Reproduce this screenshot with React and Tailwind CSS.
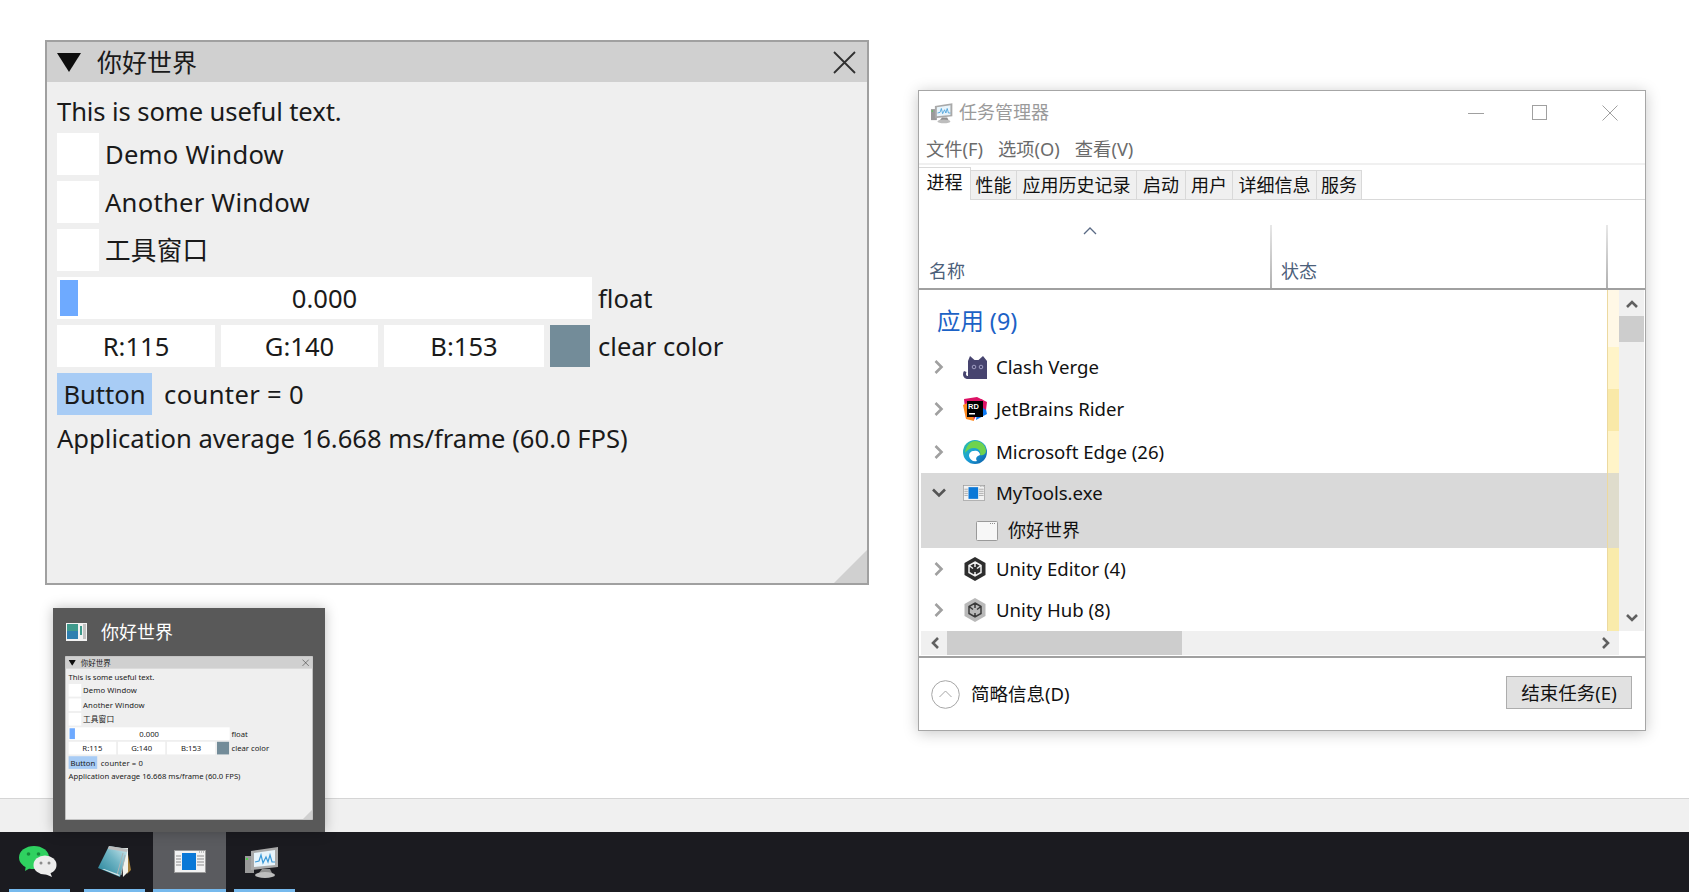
import React from "react";

const FONT = "[font-family:'Noto_Sans','Noto_Sans_CJK_SC',sans-serif]";

function ImguiBox({ w, children }) {
  return <div className={`${w} h-[42px] bg-white flex items-center justify-center pt-[2px]`}>{children}</div>;
}

function ImguiWindow() {
  return (
    <div className={`relative w-[824px] h-[545px] bg-[#efefef] border-2 border-[#a0a0a0] text-[#1a1a1a] text-[25.6px] ${FONT}`}>
      <div className="h-[40px] bg-[#d0d0d0] flex items-center justify-between pl-[10px] pr-[10px] text-[25px]">
        <div className="flex items-center gap-[16px]">
          <svg width="24" height="20" viewBox="0 0 24 20"><path d="M0 1h24L12 20z" fill="#0d0d0d" /></svg>
          <span className="leading-[40px]">你好世界</span>
        </div>
        <svg width="25" height="25" viewBox="0 0 25 25" fill="none" stroke="#303030" strokeWidth="1.8"><path d="M2 2l21 21M23 2L2 23" /></svg>
      </div>
      <div className="flex flex-col gap-[6px] pl-[10px] pt-[11px]">
        <div className="h-[34px] leading-[38px] tracking-[-0.1px]">This is some useful text.</div>
        {["Demo Window", "Another Window", "工具窗口"].map((t) => (
          <div key={t} className="flex items-center gap-[6px] h-[42px]">
            <div className="w-[42px] h-[42px] bg-white" />
            <span className="pt-[3px] tracking-[0.25px]">{t}</span>
          </div>
        ))}
        <div className="flex items-center gap-[6px] h-[42px]">
          <div className="relative w-[535px] h-[42px] bg-white flex items-center justify-center">
            <div className="absolute left-[3px] top-[3px] w-[18px] h-[36px] bg-[#6eaaff]" />
            <span className="pt-[2px]">0.000</span>
          </div>
          <span className="pt-[2px]">float</span>
        </div>
        <div className="flex items-center gap-[6px] h-[42px]">
          <ImguiBox w="w-[158px]">R:115</ImguiBox>
          <ImguiBox w="w-[157px]">G:140</ImguiBox>
          <ImguiBox w="w-[160px]">B:153</ImguiBox>
          <div className="w-[40px] h-[42px] bg-[#738c99]" />
          <span className="ml-[2px] pt-[2px]">clear color</span>
        </div>
        <div className="flex items-center gap-[12px] h-[42px]">
          <div className="w-[95px] h-[42px] bg-[#a8ccf5] flex items-center justify-center pt-[2px]">Button</div>
          <span className="pt-[2px] tracking-[0.35px]">counter = 0</span>
        </div>
        <div className="h-[34px] leading-[36px]">Application average 16.668 ms/frame (60.0 FPS)</div>
      </div>
      <div className="absolute right-0 bottom-0 w-[33px] h-[33px] bg-[#d0d0d0] [clip-path:polygon(100%_0,100%_100%,0_100%)]" />
    </div>
  );
}

function MonitorIcon({ size = 34 }) {
  return (
    <svg width={size} height={size} viewBox="0 0 34 32">
      <rect x="0" y="10" width="9" height="17" fill="#9a9a9a" />
      <rect x="1" y="12" width="2" height="2" fill="#4fd04f" />
      <path d="M6 5L33 1v20L6 24z" fill="#a9a9a9" />
      <path d="M9 7L30 4v15L9 21z" fill="#e8f4fb" />
      <path d="M10 16l4-1 2-6 2 8 3-6 2 5 2-7 2 7h3" fill="none" stroke="#3c9ad8" strokeWidth="1.2" />
      <path d="M17 23h8l2 4H14z" fill="#8f8f8f" />
      <ellipse cx="20" cy="29" rx="10" ry="3" fill="#bdbdbd" />
    </svg>
  );
}

function AppIcon({ w = 32, h = 23 }) {
  return (
    <svg width={w} height={h} viewBox="0 0 32 23">
      <rect x="0.5" y="0.5" width="31" height="22" fill="#f2f2f2" stroke="#9a9a9a" />
      <rect x="8" y="3" width="14" height="17" fill="#0a78d7" />
      <path d="M2 6h5M2 9h5M2 12h5M2 15h5M23 6h7M23 9h7M23 12h7M23 15h7M25 2h1M27 2h1M29 2h1" stroke="#8d8d8d" strokeWidth="1" />
    </svg>
  );
}

function NotepadIcon() {
  return (
    <svg width="33" height="33" viewBox="0 0 33 33">
      <defs>
        <linearGradient id="np" x1="0" y1="1" x2="1" y2="0">
          <stop offset="0" stopColor="#1f7f96" />
          <stop offset="0.55" stopColor="#6fb4c4" />
          <stop offset="1" stopColor="#d5ecf0" />
        </linearGradient>
      </defs>
      <path d="M29 4l4 21-4 4z" fill="#a37f3a" />
      <path d="M24 3l6 0 0 24-5 5z" fill="#f2f2ec" />
      <path d="M11 1l19 3-8 28L0 23z" fill="url(#np)" />
      <path d="M11 1l19 3-1 3L10 4z" fill="#bdbdbd" />
      <path d="M25 8l-6 22M27 10l-4 20" stroke="#a9b3b5" strokeWidth="1" />
      <path d="M4 24l17 7 1-1L6 24z" fill="#dfe9eb" />
    </svg>
  );
}

function WeChatIcon() {
  return (
    <svg width="38" height="31" viewBox="0 0 38 31">
      <ellipse cx="15" cy="11.5" rx="15" ry="11.5" fill="#2fd160" />
      <path d="M7 19l-1 6 7-4z" fill="#2fd160" />
      <circle cx="9.5" cy="8" r="1.8" fill="#168a3b" />
      <circle cx="19.5" cy="8" r="1.8" fill="#168a3b" />
      <ellipse cx="26" cy="19" rx="11.5" ry="9.5" fill="#ececec" />
      <path d="M31 26l2 5-7-3z" fill="#ececec" />
      <circle cx="22" cy="17" r="1.5" fill="#8c8c8c" />
      <circle cx="30" cy="17" r="1.5" fill="#8c8c8c" />
    </svg>
  );
}

function ThumbIcon() {
  return (
    <svg width="21" height="18" viewBox="0 0 21 18">
      <rect width="21" height="18" fill="#f2f2f2" />
      <rect x="1" y="1" width="11" height="15" fill="#3f9a8c" />
      <rect x="1" y="8" width="11" height="8" fill="#2f7fb0" />
      <rect x="14" y="3" width="2" height="9" fill="#3f9a8c" />
      <rect x="17" y="1" width="3" height="15" fill="#7b7b7b" opacity="0.4" />
    </svg>
  );
}

function ClashIcon() {
  return (
    <svg width="24" height="24" viewBox="0 0 24 24">
      <path d="M7 1l4.500 4h4l4.500-4 4 5v18H5C0 24-1 19 1 16l2.500 1c-1 2-.5 4 1.500 4V6z" fill="#47446f" />
      <circle cx="11" cy="12" r="1.8" fill="none" stroke="#b5b3d6" strokeWidth="0.8" />
      <circle cx="18" cy="12" r="1.8" fill="none" stroke="#b5b3d6" strokeWidth="0.8" />
    </svg>
  );
}

function RiderIcon() {
  return (
    <svg width="24" height="24" viewBox="0 0 24 24">
      <path d="M1 2l13-2 6 3-9 20-8-2z" fill="#dd1265" />
      <path d="M0 8l3 14 8 2-2-20z" fill="#ff8a1e" />
      <path d="M13 23l11-6-2-9-8 8z" fill="#0d7bf7" />
      <path d="M18 2l6 3-1 8-6-4z" fill="#dd1265" />
      <rect x="4" y="4" width="16" height="16" fill="#000" />
      <text x="5" y="12" fontSize="7.5" fontWeight="700" fill="#fff" fontFamily="Liberation Sans">RD</text>
      <rect x="6" y="16" width="6" height="1.5" fill="#fff" />
    </svg>
  );
}

function EdgeIcon() {
  return (
    <svg width="24" height="24" viewBox="0 0 24 24">
      <defs>
        <linearGradient id="eg" x1="0" y1="0" x2="1" y2="1">
          <stop offset="0" stopColor="#2fc2a0" />
          <stop offset="0.5" stopColor="#1a9fd8" />
          <stop offset="1" stopColor="#0c59a4" />
        </linearGradient>
      </defs>
      <circle cx="12" cy="12" r="12" fill="url(#eg)" />
      <path d="M12 1c6 0 11 4 11 10 0 3-3 5-6 4 1-3-1-7-6-7-4 0-7 2-9 5 1-7 5-12 10-12z" fill="#6fd34e" />
      <path d="M11 11c3-1 6 1 6 4-3 1-5 3-3 6-4 1-7-1-8-5 0-3 2-5 5-5z" fill="#fff" />
    </svg>
  );
}

function UnityIcon({ light }) {
  const fill = light ? "#b9b9b9" : "#2d2d2d";
  const stroke = light ? "#3a3a3a" : "#f0f0f0";
  return (
    <svg width="24" height="24" viewBox="0 0 24 24">
      <path d="M12 0l10.5 6v12L12 24 1.500 18V6z" fill={fill} />
      <path d="M12 5l6 3.500v7L12 19l-6-3.500v-7zM12 5v5M6 8.500l4 3M18 8.500l-4 3M12 19v-4" fill="none" stroke={stroke} strokeWidth="1.500" />
    </svg>
  );
}

function Chevron({ open }) {
  return open ? (
    <svg width="14" height="10" viewBox="0 0 14 10" fill="none" stroke="#555555" strokeWidth="2.6"><path d="M1 1.500l6 6 6-6" /></svg>
  ) : (
    <svg width="10" height="14" viewBox="0 0 10 14" fill="none" stroke="#a0a0a0" strokeWidth="2.6"><path d="M1.500 1l6 6-6 6" /></svg>
  );
}

function Row({ h = "h-[42px]", open, icon, label, sel }) {
  return (
    <div className={`${h} flex items-center text-[18.6px] ${sel ? "bg-[#d9d9d9]" : ""}`}>
      <div className="w-[42px] pr-[7px] flex justify-center"><Chevron open={open} /></div>
      <div className="w-[33px]">{icon}</div>
      <span>{label}</span>
    </div>
  );
}

const TABS = [
  ["性能", "w-[46px]"],
  ["应用历史记录", "w-[120px]"],
  ["启动", "w-[49px]"],
  ["用户", "w-[47px]"],
  ["详细信息", "w-[84px]"],
  ["服务", "w-[45px]"],
];

function TaskManager() {
  return (
    <div className={`absolute left-[918px] top-[90px] w-[728px] h-[641px] bg-white border border-[#a6a6a6] shadow-[0_2px_14px_rgba(0,0,0,0.22)] flex flex-col text-[18px] text-[#111] ${FONT}`}>
      <div className="h-[43px] flex items-center justify-between shrink-0">
        <div className="flex items-center pl-[12px] gap-[6px] text-[#9a9a9a]">
          <MonitorIcon size={22} />
          <span>任务管理器</span>
        </div>
        <div className="flex items-center">
          <svg width="16" height="16" viewBox="0 0 16 16" className="mr-[48px]" stroke="#a0a0a0" strokeWidth="1"><path d="M0 8.500h16" /></svg>
          <svg width="16" height="16" viewBox="0 0 16 16" className="mr-[54px]" fill="none" stroke="#a0a0a0" strokeWidth="1"><rect x="0.500" y="0.500" width="14" height="14" /></svg>
          <svg width="16" height="16" viewBox="0 0 16 16" className="mr-[27px]" fill="none" stroke="#a0a0a0" strokeWidth="1"><path d="M0.500 0.500l15 15M15.500 0.500l-15 15" /></svg>
        </div>
      </div>
      <div className="h-[29px] flex items-center gap-[15px] pl-[7px] pt-px text-[18.3px] text-[#6b6b6b] shrink-0">
        <span>文件(F)</span>
        <span>选项(O)</span>
        <span>查看(V)</span>
      </div>
      <div className="h-[2px] bg-[#f0f0f0] shrink-0" />
      <div className="h-[35px] flex items-end border-b border-[#d9d9d9] shrink-0">
        <div className="w-[52px] h-[33px] -mb-px z-10 bg-white border-t border-r border-[#d9d9d9] flex items-center justify-center pb-[3px]">进程</div>
        {TABS.map(([t, w]) => (
          <div key={t} className={`${w} h-[29px] bg-[#f0f0f0] border-t border-r border-[#d9d9d9] flex items-center justify-center pt-px`}>{t}</div>
        ))}
      </div>
      <div className="relative h-[90px] border-b-2 border-[#a0a0a0] shrink-0 text-[#4c607a]">
        <svg className="absolute left-[164px] top-[26px]" width="14" height="9" viewBox="0 0 14 9" fill="none" stroke="#5a6a85" strokeWidth="1.300"><path d="M1 8l6-6 6 6" /></svg>
        <div className="absolute left-[351px] top-[25px] bottom-0 w-[2px] bg-gradient-to-b from-[#e8e8e8] to-[#b0b0b0]" />
        <div className="absolute left-[687px] top-[25px] bottom-0 w-[2px] bg-gradient-to-b from-[#e8e8e8] to-[#b0b0b0]" />
        <span className="absolute left-[10px] top-[58px] leading-[26px]">名称</span>
        <span className="absolute left-[362px] top-[58px] leading-[26px]">状态</span>
      </div>
      <div className="flex h-[341px] pl-[2px] shrink-0 overflow-hidden">
        <div className="w-[687px] overflow-hidden">
          <div className="h-[56px] pl-[16px] pt-[7px] flex items-center text-[23.4px] text-[#1c62c6]">应用 (9)</div>
          <Row open={false} icon={<ClashIcon />} label="Clash Verge" />
          <Row open={false} icon={<RiderIcon />} label="JetBrains Rider" />
          <Row h="h-[43px]" open={false} icon={<EdgeIcon />} label="Microsoft Edge (26)" />
          <Row h="h-[40px]" sel open icon={<AppIcon w={22} h={16} />} label="MyTools.exe" />
          <div className="h-[35px] bg-[#d9d9d9] flex items-center pl-[55px] gap-[10px]">
            <svg width="22" height="20" viewBox="0 0 22 20"><rect x="0.500" y="0.500" width="21" height="19" rx="1" fill="#f7f7f7" stroke="#9a9a9a" /><path d="M14 2.500h6" stroke="#8d8d8d" strokeDasharray="1 1" /></svg>
            <span>你好世界</span>
          </div>
          <Row h="h-[41px]" open={false} icon={<UnityIcon />} label="Unity Editor (4)" />
          <Row open={false} icon={<UnityIcon light />} label="Unity Hub (8)" />
        </div>
        <div className="w-[12px] flex flex-col border-l border-[#ecd9a0] shrink-0">
          <div className="h-[57px] bg-[#fff8e6]" />
          <div className="h-[42px] bg-[#fff4c8]" />
          <div className="h-[42px] bg-[#f9e9a8]" />
          <div className="h-[42px] bg-[#fff4c8]" />
          <div className="h-[75px] bg-[#dfdccc]" />
          <div className="flex-1 bg-[#f9ebab]" />
        </div>
        <div className="w-[25px] bg-[#f0f0f0] flex flex-col items-center shrink-0 mr-px">
          <div className="h-[26px] flex items-center">
            <svg width="12" height="9" viewBox="0 0 12 9" fill="none" stroke="#606060" strokeWidth="2.600"><path d="M1 8l5-5 5 5" /></svg>
          </div>
          <div className="w-full h-[26px] bg-[#cdcdcd]" />
          <div className="flex-1" />
          <div className="h-[26px] flex items-center">
            <svg width="12" height="9" viewBox="0 0 12 9" fill="none" stroke="#606060" strokeWidth="2.600"><path d="M1 1l5 5 5-5" /></svg>
          </div>
        </div>
      </div>
      <div className="h-[24px] flex pl-[2px] shrink-0">
        <div className="w-[698px] bg-[#f0f0f0] flex items-center">
          <div className="w-[26px] flex justify-center">
            <svg width="9" height="12" viewBox="0 0 9 12" fill="none" stroke="#606060" strokeWidth="2.600"><path d="M8 1L3 6l5 5" /></svg>
          </div>
          <div className="w-[235px] h-[24px] bg-[#cdcdcd]" />
          <div className="flex-1" />
          <div className="w-[26px] flex justify-center">
            <svg width="9" height="12" viewBox="0 0 9 12" fill="none" stroke="#606060" strokeWidth="2.600"><path d="M1 1l5 5-5 5" /></svg>
          </div>
        </div>
      </div>
      <div className="mt-px h-[2px] bg-[#a0a0a0] shrink-0" />
      <div className="flex-1 flex items-center justify-between pl-[12px] pr-[13px] text-[#111] text-[18.5px]">
        <div className="flex items-center gap-[11px]">
          <svg width="29" height="29" viewBox="0 0 29 29" fill="none" stroke="#a6a6a6" strokeWidth="1"><circle cx="14.500" cy="14.500" r="13.800" /><path d="M8.500 17l6-6 6 6" /></svg>
          <span>简略信息(D)</span>
        </div>
        <div className="w-[126px] h-[33px] mb-[3px] bg-[#e1e1e1] border border-[#adadad] flex items-center justify-center">结束任务(E)</div>
      </div>
    </div>
  );
}

function ThumbPopup() {
  return (
    <div className={`absolute left-[53px] top-[608px] w-[272px] h-[224px] bg-[#595959] shadow-[0_0_12px_rgba(0,0,0,0.25)] flex flex-col ${FONT}`}>
      <div className="h-[48px] flex items-center pl-[13px] gap-[14px] text-[18px] text-white">
        <ThumbIcon />
        <span>你好世界</span>
      </div>
      <div className="ml-[12px] w-[248px] h-[164px] overflow-hidden">
        <div className="origin-top-left scale-[0.301]">
          <ImguiWindow />
        </div>
      </div>
    </div>
  );
}

function TaskItem({ w, underline, active, children }) {
  return (
    <div className={`${w} h-[60px] flex flex-col shrink-0 ${active ? "bg-[#5a5b5f]" : ""}`}>
      <div className="flex-1 flex items-center justify-center pt-[2px]">{children}</div>
      <div className={`${underline} h-[3px] bg-[#76b9ed] mx-auto`} />
    </div>
  );
}

export default function App() {
  return (
    <div className="relative w-[1689px] h-[892px] overflow-hidden bg-white flex flex-col">
      <div className="flex-1 min-h-0" />
      <div className="h-[34px] bg-[#f0f0f0] border-t border-[#d5d5d5] shrink-0" />
      <div className="h-[60px] bg-[#1b1b20] flex shrink-0">
        <TaskItem w="w-[75px]" underline="w-[61px] mr-[5px]"><span className="px-[4px]"><WeChatIcon /></span></TaskItem>
        <TaskItem w="w-[78px]" underline="w-[61px]"><NotepadIcon /></TaskItem>
        <TaskItem w="w-[73px]" underline="w-[73px]" active><AppIcon /></TaskItem>
        <TaskItem w="w-[77px]" underline="w-[61px] mr-[8px]"><span className="pr-[6px]"><MonitorIcon /></span></TaskItem>
      </div>
      <div className="absolute left-[45px] top-[40px]"><ImguiWindow /></div>
      <TaskManager />
      <ThumbPopup />
    </div>
  );
}
